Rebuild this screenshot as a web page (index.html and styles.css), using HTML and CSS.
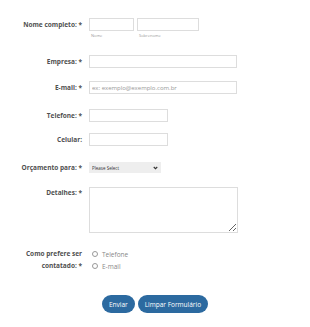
FILE: index.html
```html
<!DOCTYPE html>
<html lang="pt-BR">
<head>
    <meta charset="UTF-8">
    <meta name="viewport" content="width=device-width, initial-scale=1.0">
    <title>Orçamento</title>
    <link rel="stylesheet" href="styles.css">
</head>
<body>

    <form class="form">

        <!-- Nome -->
        <div class="row row-name">
            <label class="label">Nome completo: *</label>
            <div class="field field-pair">
                <div class="sub">
                    <input type="text" class="input input-first">
                    <span class="sublabel">Nome</span>
                </div>
                <div class="sub">
                    <input type="text" class="input input-last">
                    <span class="sublabel">Sobrenome</span>
                </div>
            </div>
        </div>

        <div class="row row-company">
            <label class="label">Empresa: *</label>
            <div class="field"><input type="text" class="input input-wide"></div>
        </div>

        <div class="row row-email">
            <label class="label">E-mail: *</label>
            <div class="field"><input type="text" class="input input-wide" placeholder="ex: exemplo@exemplo.com.br"></div>
        </div>

        <div class="row row-phone">
            <label class="label">Telefone: *</label>
            <div class="field"><input type="text" class="input input-phone"></div>
        </div>

        <div class="row row-cell">
            <label class="label">Celular:</label>
            <div class="field"><input type="text" class="input input-phone"></div>
        </div>

        <div class="row row-select">
            <label class="label">Orçamento para: *</label>
            <div class="field">
                <div class="select-wrap">
                    <select class="select">
                        <option>Please Select</option>
                    </select>
                    <svg class="chevron" width="5" height="4" viewBox="0 0 10 8">
                        <path d="M1.5 2 L5 5.5 L8.5 2" fill="none" stroke="#333" stroke-width="2.2"/>
                    </svg>
                </div>
            </div>
        </div>

        <div class="row row-details">
            <label class="label">Detalhes: *</label>
            <div class="field"><textarea class="textarea"></textarea></div>
        </div>

        <div class="row row-contact">
            <label class="label label-multi">Como prefere ser contatado: *</label>
            <div class="field radios">
                <label class="radio"><input type="radio" name="contato"> Telefone</label>
                <label class="radio"><input type="radio" name="contato"> E-mail</label>
            </div>
        </div>

        <div class="buttons">
            <button type="submit" class="btn">Enviar</button>
            <button type="reset" class="btn">Limpar Formulário</button>
        </div>

    </form>

</body>
</html>
```

FILE: styles.css
```css
body {
    margin: 0;
    font-family: "Open Sans", Arial, sans-serif;
    background-color: #ffffff;
    color: #555555;
}
.form {
    padding-top: 18px;
}
.row {
    display: flex;
    align-items: flex-start;
}
.label {
    width: 74px;
    margin-left: 8px;
    margin-right: 7px;
    text-align: right;
    font-size: 6.5px;
    font-weight: bold;
    line-height: 13px;
    color: #505050;
}
.field {
    display: flex;
}
.field-pair {
    gap: 3px;
}
.sub {
    display: flex;
    flex-direction: column;
}
.sublabel {
    font-size: 4px;
    color: #999999;
    margin-top: 2px;
    padding-left: 2px;
}
.input {
    box-sizing: border-box;
    height: 13px;
    border: 1px solid #dddddd;
    padding: 0 2px;
    font-family: "Open Sans", Arial, sans-serif;
    font-size: 6px;
    outline: none;
}
.input::placeholder {
    color: #999999;
}
.input-first {
    width: 45px;
}
.input-last {
    width: 62px;
}
.input-wide {
    width: 148px;
}
.input-phone {
    width: 79px;
}
.row-name {
    margin-bottom: 17px;
}
.row-company {
    margin-bottom: 13px;
}
.row-email {
    margin-bottom: 15px;
}
.row-phone {
    margin-bottom: 11px;
}
.row-cell {
    margin-bottom: 15px;
}
.row-select {
    margin-bottom: 13px;
}
.select-wrap {
    position: relative;
    display: flex;
    margin-top: 1px;
}
.select {
    appearance: none;
    -webkit-appearance: none;
    box-sizing: border-box;
    width: 72px;
    height: 11px;
    margin: 0;
    border: none;
    border-radius: 0;
    background-color: #eeeeee;
    padding: 0 3px;
    font-family: "Open Sans", Arial, sans-serif;
    font-size: 4.5px;
    color: #333333;
    outline: none;
}
.chevron {
    position: absolute;
    right: 3px;
    top: 4px;
}
.row-details .label {
    line-height: 11px;
}
.textarea {
    box-sizing: border-box;
    width: 149px;
    height: 46px;
    border: 1px solid #dddddd;
    margin: 0;
    outline: none;
}
.row-contact {
    margin-top: 15px;
}
.label-multi {
    line-height: 12px;
}
.radios {
    flex-direction: column;
    padding-left: 3px;
}
.radio {
    display: flex;
    align-items: center;
    height: 12px;
    font-size: 6.5px;
    color: #888888;
}
.radio input {
    appearance: none;
    -webkit-appearance: none;
    box-sizing: border-box;
    width: 6px;
    height: 6px;
    margin: 0 4px 0 0;
    border: 1px solid #999999;
    border-radius: 50%;
    background: #ffffff;
}
.buttons {
    display: flex;
    justify-content: center;
    gap: 3px;
    margin-top: 23px;
}
.btn {
    height: 18px;
    padding: 0 7px;
    border: none;
    border-radius: 9px;
    background-color: #2c6aa0;
    color: #ffffff;
    font-family: "Open Sans", Arial, sans-serif;
    font-size: 6.5px;
    cursor: pointer;
}
.btn:hover {
    background-color: #245a8a;
}
```
